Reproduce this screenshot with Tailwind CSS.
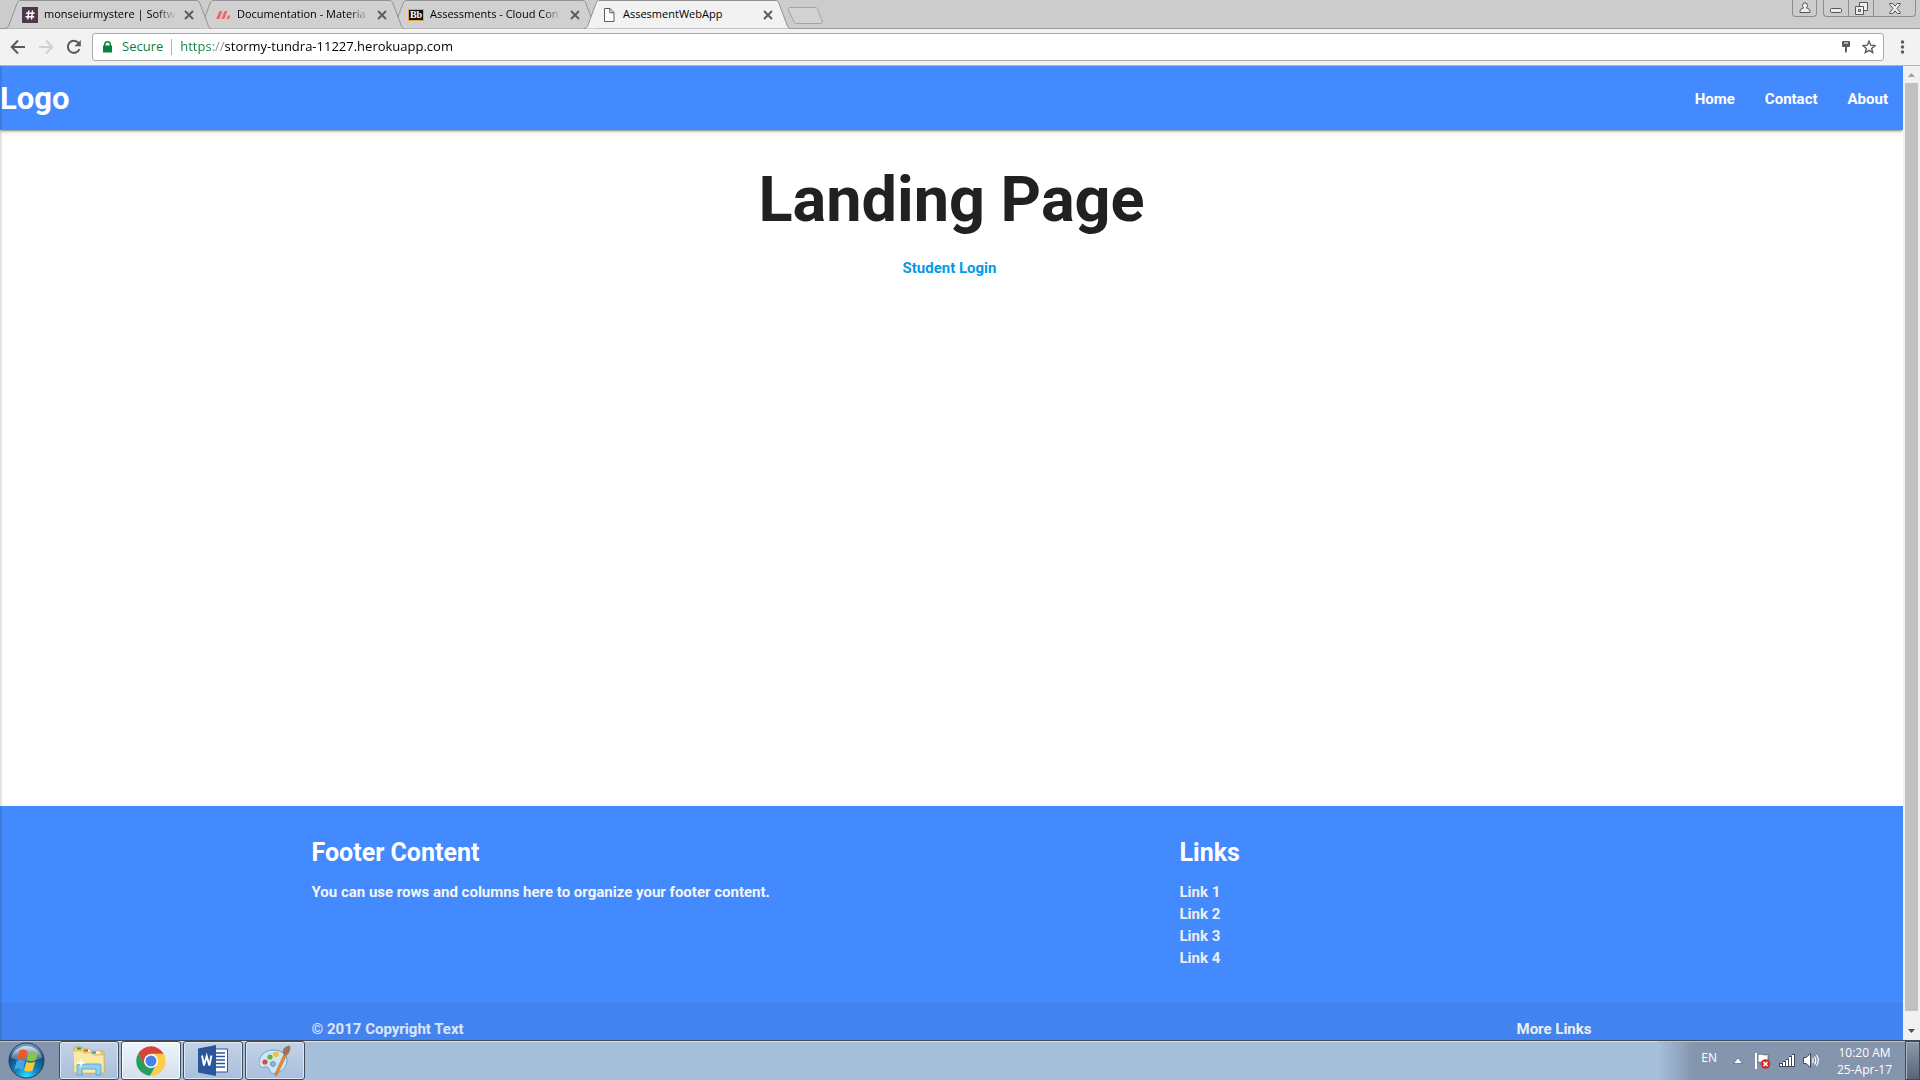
<!DOCTYPE html>
<html lang="en">
<head>
<meta charset="utf-8">
<title>AssesmentWebApp</title>
<script src="https://cdn.jsdelivr.net/npm/@tailwindcss/browser@4"></script>
</head>
<body class="flex h-screen flex-col overflow-hidden bg-white font-['Open_Sans',sans-serif] text-xs text-black">

<svg class="hidden">
  <symbol id="tab-close" viewBox="0 0 10 10"><path d="M1 1l8 8M9 1L1 9" fill="none" stroke="#5a5a5a" stroke-width="1.8"/></symbol>
  <symbol id="tab-shape" viewBox="0 0 206 29"><path d="M0 28.500C3 28 3 27 4 25L12 3.500C13 1 14 .5 16 .5H191C193 .5 194 1 195 3.500L203 25C204 27 204 28 206 28.500" stroke="#939393"/></symbol>
</svg>

<!-- Tab strip -->
<header class="relative flex h-[29px] shrink-0 justify-between border-b border-[#999] bg-[#ccc]">
  <div class="flex pl-[5px]" role="tablist">
    <div class="relative z-30 flex h-[29px] w-[206px] shrink-0 items-center pr-4 pl-[17px]" role="tab">
      <svg class="absolute inset-0 h-[29px] w-[206px] fill-[#d0d0d0]"><use href="#tab-shape"/></svg>
      <svg class="relative size-4 shrink-0" viewBox="0 0 16 16"><rect width="16" height="16" fill="#4c374b"/><path d="M6.800 3.500l-1 9M10.500 3.500l-1 9M4 6.300h8.700M3.500 9.700h8.700" stroke="#fff" stroke-width="1.500" fill="none"/></svg>
      <span class="relative ml-1.5 w-[132px] mask-r-from-85% text-[11px] whitespace-nowrap">monseiurmystere | Softw</span>
      <button class="relative ml-2 shrink-0" aria-label="Close tab"><svg class="size-[10px]"><use href="#tab-close"/></svg></button>
    </div>
    <div class="relative z-20 -ml-[13px] flex h-[29px] w-[206px] shrink-0 items-center pr-4 pl-[17px]" role="tab">
      <svg class="absolute inset-0 h-[29px] w-[206px] fill-[#d0d0d0]"><use href="#tab-shape"/></svg>
      <svg class="relative size-4 shrink-0" viewBox="0 0 16 16"><path d="M4.500 4h3L4.500 12H1zM9.500 4h3L9.500 12H6.200zM13 8.500h2.500L14 12h-2.500z" fill="#f0696f"/></svg>
      <span class="relative ml-1.5 w-[132px] mask-r-from-85% text-[11px] whitespace-nowrap">Documentation - Materia</span>
      <button class="relative ml-2 shrink-0" aria-label="Close tab"><svg class="size-[10px]"><use href="#tab-close"/></svg></button>
    </div>
    <div class="relative z-10 -ml-[13px] flex h-[29px] w-[206px] shrink-0 items-center pr-4 pl-[17px]" role="tab">
      <svg class="absolute inset-0 h-[29px] w-[206px] fill-[#d0d0d0]"><use href="#tab-shape"/></svg>
      <span class="relative flex h-3 w-4 shrink-0 items-center justify-center border border-[#e6a63a] bg-[#111] font-['Liberation_Serif',serif] text-[10px] leading-none font-bold text-white">Bb</span>
      <span class="relative ml-1.5 w-[132px] mask-r-from-85% text-[11px] whitespace-nowrap">Assessments - Cloud Con</span>
      <button class="relative ml-2 shrink-0" aria-label="Close tab"><svg class="size-[10px]"><use href="#tab-close"/></svg></button>
    </div>
    <div class="relative z-40 -ml-[13px] flex h-[29px] w-[206px] shrink-0 items-center pr-4 pl-[17px]" role="tab" aria-selected="true">
      <svg class="absolute inset-0 h-[29px] w-[206px] fill-[#f2f2f2]"><use href="#tab-shape"/></svg>
      <svg class="relative size-4 shrink-0" viewBox="0 0 16 16"><path d="M3.500 1.500h5.500l4 4v9h-9.500zM8.800 1.500v4.200h4.200" fill="#fff" stroke="#5a5a5a"/></svg>
      <span class="relative ml-1.5 w-[132px] text-[11px] whitespace-nowrap">AssesmentWebApp</span>
      <button class="relative ml-2 shrink-0" aria-label="Close tab"><svg class="size-[10px]"><use href="#tab-close"/></svg></button>
    </div>
    <button class="-ml-[3px] self-start pt-[7px]" aria-label="New tab"><svg class="h-[18px] w-9" viewBox="0 0 36 18"><path d="M3 .5h25c1.500 0 2 .5 2.500 1.500l4.500 12c.5 1.500 0 2.500-1.500 2.500H9.500c-1.500 0-2-.5-2.500-1.500L1.500 3c-.5-1.500 0-2.500 1.500-2.500z" fill="#d2d2d2" stroke="#a4a4a4"/></svg></button>
  </div>
  <div class="flex h-[17px] gap-1.5 pr-1">
    <button class="flex w-[25px] items-center justify-center rounded-b border border-t-0 border-[#8d8d8d]" aria-label="Profile"><svg class="h-3 w-3" viewBox="0 0 12 12"><path d="M6 .8a2.500 2.500 0 0 1 2.500 2.700c0 1-.5 2-1.200 2.500 2.200.5 3.700 1.500 3.700 3v1.500H1V9c0-1.500 1.500-2.500 3.700-3C4 5.500 3.500 4.500 3.500 3.500A2.500 2.500 0 0 1 6 .8z" fill="#eee" stroke="#555"/></svg></button>
    <div class="flex w-[93px] divide-x divide-[#8d8d8d] rounded-b border border-t-0 border-[#8d8d8d]">
      <button class="flex w-[25px] items-center justify-center" aria-label="Minimise"><svg class="h-3 w-3" viewBox="0 0 12 12"><rect x=".5" y="6.500" width="11" height="4" rx="1" fill="#eee" stroke="#555"/></svg></button>
      <button class="flex w-[25px] items-center justify-center" aria-label="Restore"><svg class="h-[13px] w-[13px]" viewBox="0 0 13 13"><path d="M4.500.5h8v8h-8z" fill="#eee" stroke="#555"/><path d="M.5 4.500h8v8h-8z" fill="#eee" stroke="#555"/><path d="M3.500 7.500h2v2h-2z" fill="#ccc" stroke="#555"/></svg></button>
      <button class="flex flex-1 items-center justify-center" aria-label="Close"><svg class="h-[11px] w-3" viewBox="0 0 12 11"><path d="M.8.5h3L6 3.200 8.200.5h3v1L8 5.500l3.200 4v1h-3L6 7.800l-2.200 2.700h-3v-1L4 5.500.8 1.500z" fill="#eee" stroke="#555"/></svg></button>
    </div>
  </div>
</header>

<!-- Toolbar -->
<div class="flex h-[37px] shrink-0 items-center border-b border-[#b5b5b5] bg-[#f2f2f2] pr-[15px] pl-2.5">
  <button aria-label="Back"><svg class="size-4" viewBox="0 0 16 16"><path d="M15 8H2M8 1.500L1.700 8 8 14.500" fill="none" stroke="#5a5a5a" stroke-width="2"/></svg></button>
  <button class="ml-3" aria-label="Forward"><svg class="size-4" viewBox="0 0 16 16"><path d="M1 8h13M8 1.500L14.300 8 8 14.500" fill="none" stroke="#d0d0d0" stroke-width="2"/></svg></button>
  <button class="ml-3" aria-label="Reload"><svg class="size-4" viewBox="0 0 16 16"><path d="M13.500 10A6 6 0 1 1 12.500 4" fill="none" stroke="#5a5a5a" stroke-width="2"/><path d="M14.800 1v6.300H8.500z" fill="#5a5a5a"/></svg></button>
  <div class="ml-2.5 flex h-7 flex-1 items-center rounded-[3px] border border-[#a9a9a9] bg-white pr-[7px] pl-2.5">
    <svg class="h-3 w-[9px]" viewBox="0 0 9 12"><path d="M0 4.500h1V3.500a3.500 3.500 0 0 1 7 0v1h1V11q0 .5-.5.5h-8Q0 11.500 0 11zM2.500 4.500h4v-1a2 2 0 0 0-4 0z" fill="#0b8043"/></svg>
    <label class="ml-2.5 text-[13px] text-[#0b8043]" for="url">Secure</label>
    <span class="mx-2 h-4 w-px bg-[#b0b0b0]"></span>
    <!-- The scheme is tinted with a hard-stop gradient clipped to the text -->
    <input id="url" class="min-w-0 flex-1 bg-[linear-gradient(90deg,#0b8043_31px,#888_31px,#888_44px,#000_44px)] bg-clip-text text-[13px] text-transparent outline-none" value="https://stormy-tundra-11227.herokuapp.com">
    <button aria-label="Saved password"><svg class="h-3 w-2" viewBox="0 0 8 12"><path d="M1 0h6q1 0 1 1v4q0 1-1 1H5v4l-1 2-1-1V6H1Q0 6 0 5V1Q0 0 1 0z" fill="#5a5a5a"/><path d="M2 1.500h4v1H2z" fill="#fff"/></svg></button>
    <button class="ml-3" aria-label="Bookmark"><svg class="size-[14px]" viewBox="0 0 14 14"><path d="M7 1.200l1.700 4 4.300.4-3.300 2.800 1 4.200L7 10.400l-3.700 2.200 1-4.200L1 5.600l4.300-.4z" fill="none" stroke="#5a5a5a" stroke-width="1.400"/></svg></button>
  </div>
  <button class="ml-4" aria-label="Menu"><svg class="h-[14px] w-[5px]" viewBox="0 0 5 14"><g fill="#5a5a5a"><circle cx="2.500" cy="2" r="1.700"/><circle cx="2.500" cy="7" r="1.700"/><circle cx="2.500" cy="12" r="1.700"/></g></svg></button>
</div>

<!-- Web page and its scroll bar -->
<div class="flex min-h-0 flex-1">
  <div class="relative flex flex-1 flex-col overflow-hidden font-[Roboto,sans-serif] text-[15px] leading-[22px] font-bold text-[#212121]">
    <nav class="z-10 flex h-16 shrink-0 items-center justify-between bg-[#448aff] pt-0.5 text-white shadow-[0_2px_2px_0_rgba(0,0,0,0.14),0_1px_5px_0_rgba(0,0,0,0.12),0_3px_1px_-2px_rgba(0,0,0,0.2)]">
      <a href="#" class="text-[31px]">Logo</a>
      <ul class="flex">
        <li><a href="#" class="px-[15px]">Home</a></li>
        <li><a href="#" class="px-[15px]">Contact</a></li>
        <li><a href="#" class="px-[15px]">About</a></li>
      </ul>
    </nav>
    <main class="flex-1 pt-[35px] text-center">
      <h1 class="text-[63px] leading-[69px]">Landing Page</h1>
      <p class="mt-[23px] pr-1"><a href="#" class="text-[#039be5]">Student Login</a></p>
    </main>
    <footer class="bg-[#448aff] text-white">
      <div class="mx-auto grid max-w-[1280px] grid-cols-12 gap-x-[22px] pt-[33px] pb-[34px]">
        <section class="col-span-6">
          <h5 class="text-[25px] leading-[27px]">Footer Content</h5>
          <p class="mt-[15px] text-[#f5f5f5]">You can use rows and columns here to organize your footer content.</p>
        </section>
        <section class="col-span-4 col-start-9">
          <h5 class="text-[25px] leading-[27px]">Links</h5>
          <ul class="mt-[15px] text-[#eee]">
            <li><a href="#">Link 1</a></li>
            <li><a href="#">Link 2</a></li>
            <li><a href="#">Link 3</a></li>
            <li><a href="#">Link 4</a></li>
          </ul>
        </section>
      </div>
      <div class="h-[37px] overflow-hidden bg-[rgba(51,51,51,0.08)] leading-[52px]">
        <div class="mx-auto flex max-w-[1280px] justify-between">
          <span class="text-white/80">© 2017 Copyright Text</span>
          <a href="#" class="text-[#eee]">More Links</a>
        </div>
      </div>
    </footer>
    <div class="pointer-events-none absolute inset-y-0 left-0 z-20 w-[3px] bg-linear-to-r from-black/15 to-transparent"></div>
  </div>
  <div class="flex w-[17px] flex-col items-center bg-[#f1f1f1]" aria-hidden="true">
    <svg class="h-[17px] w-[17px]" viewBox="0 0 17 17"><path d="M5 11l3.500-4 3.500 4z" fill="#a3a3a3"/></svg>
    <div class="w-[13px] flex-1 bg-[#c1c1c1]"></div>
    <div class="h-3"></div>
    <svg class="h-[17px] w-[17px]" viewBox="0 0 17 17"><path d="M5 6l3.500 4L12 6z" fill="#505050"/></svg>
  </div>
</div>

<!-- Taskbar -->
<footer class="flex h-10 shrink-0 border-t border-[#414b57] bg-[#a6bfdb] shadow-[inset_0_1px_0_#d5e2f0]">
  <div class="flex w-[59px] items-center bg-[#8495ad] pl-2 shadow-[inset_0_1px_0_#b9c5d5]">
    <button aria-label="Start">
      <svg class="size-[37px]" viewBox="0 0 37 37">
        <defs>
          <radialGradient id="orb" cx=".5" cy=".95" r=".9"><stop offset="0" stop-color="#2fe0ff"/><stop offset=".35" stop-color="#1286c0"/><stop offset=".75" stop-color="#164a78"/><stop offset="1" stop-color="#6f9cc0"/></radialGradient>
          <linearGradient id="orb-shine" x2="0" y2="1"><stop offset="0" stop-color="#fff" stop-opacity=".75"/><stop offset="1" stop-color="#fff" stop-opacity=".15"/></linearGradient>
        </defs>
        <circle cx="18.500" cy="18.500" r="17.500" fill="url(#orb)" stroke="#1d3f60"/>
        <path d="M3 16a16 16 0 0 1 31 0c-10 4-21 4-31 0z" fill="url(#orb-shine)"/>
        <path d="M11.500 8.500c3-1.500 5.500-1 8 .5l-2.200 8.800c-2.500-1.500-5-1.700-8.300-.3z" fill="#f0582a"/>
        <path d="M21 10c2.500 1.500 5.500 1.500 9.500-.5l-2.800 8.500c-3 1.700-5.700 1.700-8.900.2z" fill="#8cc63f"/>
        <path d="M8.600 18.800c3-1.500 5.700-1.200 8.400.3l-2.300 8.700c-2.500-1.500-5.200-1.800-8.300 0z" fill="#45a5e6"/>
        <path d="M18.400 19.700c3 1.500 5.700 1.500 8.900-.2l-2.600 8.700c-3 1.700-5.700 1.700-8.600.2z" fill="#fcc733"/>
      </svg>
    </button>
  </div>
  <div class="flex flex-1 gap-0.5">
    <button class="flex w-[60px] items-center justify-center rounded-[3px] border border-[#414b57] bg-linear-to-b from-[#c3d3e6] to-[#a9bfdc] shadow-[inset_0_0_0_1px_#dfe9f4]" aria-label="Windows Explorer">
      <svg class="h-[30px] w-8" viewBox="0 0 32 30">
        <path d="M1 2q0-1 1-1h7l1 2h7l1 2h11q2 0 2 2v20H1z" fill="#ecd27a" stroke="#c9a548" stroke-width=".7"/>
        <path d="M4 1.500h4v2H4z" fill="#17a32c"/><path d="M11 3.500h6v2h-6z" fill="#fff"/><path d="M11 3.500h4v2h-4z" fill="#d9482b"/><path d="M19 5.500h8v2h-8z" fill="#fff"/><path d="M19 5.500h4v2h-4z" fill="#2b8ad9"/>
        <path d="M0 5h9l2 2h7l2 2h11v17q0 1-1 1H1z" fill="#f8e9a6" stroke="#d7b85c" stroke-width=".7"/>
        <path d="M4 29V20q0-2 2-2h20q2 0 2 2v9h-5v-6H9v6z" fill="#8fd0ee" stroke="#4c9fc9" stroke-width=".8"/>
        <path d="M8 12l1 4 4 1-4 1-1 4-1-4-4-1 4-1z" fill="#fff"/>
      </svg>
    </button>
    <button class="flex w-[60px] items-center justify-center rounded-[3px] border border-[#414b57] bg-linear-to-b from-[#f0f4fa] to-[#d3dfee] shadow-[inset_0_0_0_1px_#fff]" aria-label="Google Chrome">
      <svg class="size-[30px]" viewBox="0 0 30 30">
        <path d="M2.300 7.500A14.700 14.700 0 0 0 14 29.700l6.500-11.200L15 15 8.500 18z" fill="#2b9d5a"/>
        <path d="M27.700 7.800H15l6.200 10.800L14 29.700A14.700 14.700 0 0 0 27.700 7.800z" fill="#fdcd46"/>
        <path d="M15 7.800h12.700A14.700 14.700 0 0 0 2.300 7.500l6.300 11z" fill="#d6453a"/>
        <circle cx="15" cy="15" r="7" fill="#fff"/><circle cx="15" cy="15" r="5.500" fill="#4a80e8"/>
      </svg>
    </button>
    <button class="flex w-[60px] items-center justify-center rounded-[3px] border border-[#414b57] bg-linear-to-b from-[#c3d3e6] to-[#a9bfdc] shadow-[inset_0_0_0_1px_#dfe9f4]" aria-label="Word">
      <svg class="h-[31px] w-[30px]" viewBox="0 0 30 31">
        <path d="M17 4h12.500v23H17z" fill="#fff" stroke="#2b579a"/><path d="M18 8h9M18 11.500h9M18 15h9M18 18.500h9M18 22h9" stroke="#2b579a" stroke-width="1.500"/>
        <path d="M0 3.500L18 0v31L0 27.500z" fill="#2b579a"/><path d="M4 10.500l2 10 2.700-9.500 2.600 9.500 2.200-10" fill="none" stroke="#fff" stroke-width="1.900"/>
      </svg>
    </button>
    <button class="flex w-[60px] items-center justify-center rounded-[3px] border border-[#414b57] bg-linear-to-b from-[#c3d3e6] to-[#a9bfdc] shadow-[inset_0_0_0_1px_#dfe9f4]" aria-label="Paint">
      <svg class="h-[31px] w-8" viewBox="0 0 32 31">
        <path d="M14 5C5 5 0 12 0 18c0 4 3 5 6 4 3-.5 4 1 5 4 1 3 5 3 9 1 5-2 8-7 8-12 0-6-6-10-14-10z" fill="#cfe6f5" stroke="#6aa5cc"/>
        <circle cx="6" cy="17" r="2.600" fill="#e0483a"/><circle cx="11" cy="12" r="2.600" fill="#5cb647"/><circle cx="17" cy="9.500" r="2.800" fill="#f5c12c"/><circle cx="14" cy="19" r="2.400" fill="#8db8d6" stroke="#5b93ba"/>
        <path d="M25 9l2.500 1.500L18 30l-2 1 .3-3z" fill="#ea8a2e" stroke="#b8651c" stroke-width=".5"/>
        <path d="M24 8.500c-1-4 1-7 7-8 1 4-.5 8-4 10z" fill="#9c7455"/>
      </svg>
    </button>
  </div>
  <div class="flex items-center bg-linear-to-r from-[#a6bfdb] to-[#8495ad] to-[36px] pl-[43px] text-white shadow-[inset_0_1px_0_#b9c5d5]">
    <span class="mb-1.5 text-xs">EN</span>
    <button class="ml-4" aria-label="Show hidden icons"><svg class="h-[7px] w-[10px]" viewBox="0 0 10 7"><path d="M.5 6.500L5 .8l4.500 5.700z" fill="#fff" stroke="#4a5563" stroke-width=".6"/></svg></button>
    <svg class="ml-[11px] h-4 w-[17px]" viewBox="0 0 17 16"><path d="M2 0v16" stroke="#fff" stroke-width="2"/><path d="M4 1.500c4-1.500 5 1.500 10 0v8c-5 1.500-6-1.500-10 0z" fill="#fff" stroke="#4a5563" stroke-width=".7"/><circle cx="11.500" cy="11" r="4.800" fill="#d9262b"/><path d="M9.500 9l4 4M13.500 9l-4 4" stroke="#fff" stroke-width="1.600"/></svg>
    <svg class="ml-2 h-[13px] w-4" viewBox="0 0 16 13"><path d="M0 9h4V7h3V5h3V2h3V0h3v13H0z" fill="#3f4a58"/><path d="M1 10h2v2H1zM4 8h2v4H4zM7 6h2v6H7zM10 3h2v9h-2zM13 1h2v11h-2z" fill="#fff"/></svg>
    <svg class="ml-2 h-[15px] w-4" viewBox="0 0 16 15"><path d="M.5 4.500h2.500L7.500.5v14l-4.500-4H.5z" fill="#fff" stroke="#3f4a58"/><path d="M9.500 5q1.500 2.500 0 5M11.500 3.500q2.500 4 0 8M13.500 2q3.500 5.500 0 11" fill="none" stroke="#fff" stroke-width="1.200"/></svg>
    <div class="ml-[18px] text-center text-xs leading-[17px]"><div>10:20 AM</div><div>25-Apr-17</div></div>
    <button class="ml-[13px] h-full w-[15px] border border-[#414b57] bg-linear-to-b from-[#8c9aac] to-[#566475] shadow-[inset_1px_1px_0_#a9b5c5]" aria-label="Show desktop"></button>
  </div>
</footer>
</body>
</html>
